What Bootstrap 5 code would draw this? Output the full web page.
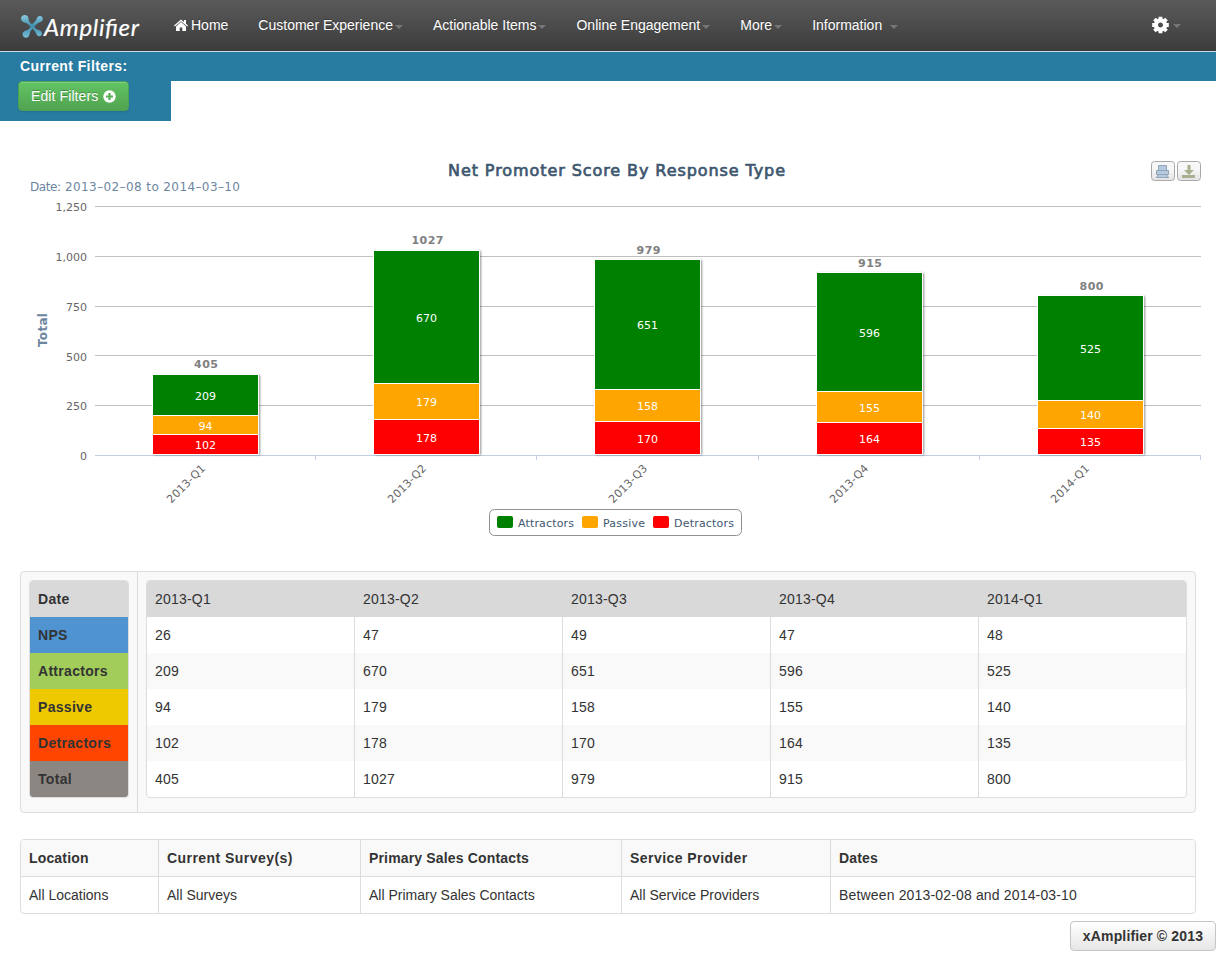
<!DOCTYPE html>
<html lang="en">
<head>
<meta charset="utf-8">
<title>xAmplifier</title>
<link href="https://cdn.jsdelivr.net/npm/bootstrap@5.3.0/dist/css/bootstrap.min.css" rel="stylesheet">
<style>
body{font:14px/20px "Liberation Sans",Arial,sans-serif;color:#333;background:#fff;overflow-x:hidden}
.topbar{height:52px;padding:0;background:linear-gradient(#5a5a5a,#3c3c3c);border-bottom:1px solid #cfdbe2}
.topbar .nav-link{padding:15px 15px 17px;color:#fff;line-height:20px;display:flex;align-items:center;text-shadow:0 -1px 0 rgba(0,0,0,.25)}
.logo{width:159px;flex:none}
.settings{margin-right:35px}
.home-icon{margin-right:3px}
.arrow{border:4px solid transparent;border-top-color:#777;border-bottom:0;margin:3px 0 0 2px}
.filterbar{height:29px;background:#287ba1;color:#fff;font-weight:700;padding:4px 20px;letter-spacing:.4px}
.filtertail{height:40px;width:171px;background:#287ba1;padding-left:18px}
.btn-edit{height:30px;width:111px;padding:4px 0 4px 12px;font-size:14px;line-height:20px;letter-spacing:.1px;color:#fff;background:linear-gradient(#62c462,#51a351);border:1px solid #4ba257;border-radius:4px;text-align:left;text-shadow:0 -1px 0 rgba(0,0,0,.25);box-shadow:inset 0 1px 0 rgba(255,255,255,.2),0 1px 2px rgba(0,0,0,.1);display:flex;align-items:center;gap:5px}
.chart{display:block}
.chart text{font-family:"DejaVu Sans",sans-serif;font-size:11px}
.chart .inbar{fill:#fff;text-anchor:middle}
.chart .sum{fill:#808080;font-weight:700;text-anchor:middle}
.chart .tick{fill:#666;text-anchor:end}
.chart .key{fill:#3e576f}
.chart .title{font-size:16px;fill:#3e576f;stroke:#3e576f;stroke-width:.7px}
.chart .sub{font-size:12px;fill:#6d869f}
.chart .axis{font-size:12px;font-weight:700;fill:#6d869f}
.panel{margin:0 20px;height:242px;border:1px solid #ddd;border-radius:4px;background:#f9f9f9;letter-spacing:.2px}
.panel .side{width:117px;border-right:1px solid #ddd;padding:8px}
.panel .main{padding:8px}
.tbl{margin:0;color:#333;border-collapse:separate;border-spacing:0;table-layout:fixed;border:1px solid #ddd;border-radius:4px;overflow:hidden;background:#fff;width:100%}
.tbl th,.tbl td{height:36px;padding:8px;line-height:20px;border:0;text-align:left}
.panel td+td{border-left:1px solid #ddd}
.panel .heads td{background:#d9d9d9;border-color:#d9d9d9}
.striped tr:nth-child(odd):not(.heads) td{background:#f9f9f9}
.side th{letter-spacing:.3px}
.info{margin:26px 20px 0}
.info .tbl th{background:#f9f9f9;letter-spacing:.16px}
.info .tbl th:nth-child(even){letter-spacing:.45px}
.info td{border-top:1px solid #ddd}
.info td:last-child{letter-spacing:.16px}
.info th+th,.info td+td{border-left:1px solid #ddd}
.info .tbl td{height:37px}
.btn-foot{width:146px;height:30px;margin-top:7px;padding:4px 0;font-size:14px;line-height:20px;font-weight:700;color:#333;border:1px solid #c5c5c5;border-radius:4px;background:linear-gradient(#fff,#e6e6e6);letter-spacing:.15px}
</style>
</head>
<body>
<nav class="topbar d-flex">
  <a class="logo" href="#" aria-label="Amplifier">
    <svg width="159" height="51" viewBox="0 0 159 51">
      <defs><linearGradient id="xg" x1="0" y1="0" x2="0" y2="1"><stop offset="0" stop-color="#8ccbe0"/><stop offset=".5" stop-color="#3f8fae"/><stop offset="1" stop-color="#79bfd8"/></linearGradient></defs>
      <path fill="url(#xg)" d="M21 18.500c0-2.500 2-3.700 4-3.500 2.500.2 3.500 2 3.500 4 .2 2.500 1.500 3.500 3.500 5.500 2.500-2.500 4-3.500 4.500-5.500.5-2 1.800-3 3.500-3s2.800 1.300 2.800 3c0 2-1.500 3-3.500 3.500-2.300.8-3.500 2.300-5 4.500 1.500 2 3 2.700 5 3.300 1.800.6 2.700 1.700 2.700 3.300 0 1.500-1.200 2.600-2.700 2.600-1.800 0-2.700-1.200-3.300-2.900-.6-1.800-1.800-3.200-3.500-4.600-1.700 1.500-2.500 3-2.800 5-.3 2.200-1.400 4-3.700 4-2 0-3.500-1.500-3.500-3.400 0-2.300 1.700-3.300 3.500-3.800 2-.6 3.300-1.700 4.500-3.500-1.500-2-3.200-3.800-5.500-4.300-2.500-.6-4-2-4-4.200z"/>
      <text x="44" y="36" textLength="95" fill="#fff" stroke="#fff" stroke-width=".2" font-family="Lato, sans-serif" font-size="24" font-style="italic">Amplifier</text>
    </svg>
  </a>
  <ul class="nav flex-nowrap">
    <li><a class="nav-link" href="#"><svg class="home-icon" width="14" height="12" viewBox="0 0 14 12" fill="#fff"><path d="M7 .5 0 6.600l.8.9L7 2.200l6.200 5.300.8-.9-2-1.800V1h-2v2zM7 3.100 2 7.400V12H5.700V8.500h2.600V12H12V7.400z"/></svg>Home</a></li>
    <li><a class="nav-link" href="#">Customer Experience<span class="arrow"></span></a></li>
    <li><a class="nav-link" href="#">Actionable Items<span class="arrow"></span></a></li>
    <li><a class="nav-link" href="#">Online Engagement<span class="arrow"></span></a></li>
    <li><a class="nav-link" href="#">More<span class="arrow"></span></a></li>
    <li><a class="nav-link" href="#">Information<span class="arrow ms-2"></span></a></li>
  </ul>
  <a class="nav-link settings ms-auto pe-0" href="#" aria-label="Settings"><svg width="17" height="18" viewBox="-8.500 -9 17 18"><circle r="4.600" fill="none" stroke="#fff" stroke-width="4.200"/><g stroke="#fff" stroke-width="3.800"><path d="M0-8.300V-5M0 8.300V5M-8.300 0H-5M8.300 0H5M-6-6l2.500 2.500M6 6 3.500 3.500M-6 6l2.500-2.500M6-6 3.500-3.500"/></g></svg><span class="arrow ms-1"></span></a>
</nav>
<div class="filterbar">Current Filters:</div>
<div class="filtertail"><button class="btn btn-edit" type="button">Edit Filters <svg width="13" height="13" viewBox="0 0 13 13"><circle cx="6.500" cy="6.500" r="6.200" fill="#fff"/><path d="M6.500 3v7M3 6.500h7" stroke="#55ad55" stroke-width="2.200"/></svg></button></div>

<svg class="chart" width="1216" height="450" viewBox="0 121 1216 450">
  <defs>
    <linearGradient id="bg" x1="0" y1="0" x2="0" y2="1"><stop offset=".4" stop-color="#f7f7f7"/><stop offset="1" stop-color="#e3e3e3"/></linearGradient>
    <filter id="sh" x="-10%" y="-10%" width="120%" height="120%"><feGaussianBlur stdDeviation=".8"/></filter>
  </defs>
  <text class="title" x="448" y="176" textLength="337">Net Promoter Score By Response Type</text>
  <text class="sub" x="30" y="191"><tspan textLength="31">Date:</tspan><tspan x="65" textLength="175">2013–02–08 to 2014–03–10</tspan></text>
  <text class="axis" transform="translate(47 347) rotate(-90)" textLength="34">Total</text>
  <!-- export buttons -->
  <g stroke="#aaa" fill="url(#bg)"><rect x="1151.500" y="161.500" width="23" height="19" rx="3"/><rect x="1177.500" y="161.500" width="23" height="19" rx="3"/></g>
  <g fill="#b5c9df" stroke="#91a4b8"><path d="M1158.500 165.500h8v5h-8z"/><path d="M1156.500 170.500h12v4h-12z"/><path d="M1158.500 174.500h8l2 3h-12z"/></g>
  <g fill="#a8af8e"><path d="M1187.500 165h3v5h3.500l-5 5-5-5h3.500z"/><path d="M1182 175h13v3h-13z"/></g>
  <g stroke="#c0c0c0" fill="none"><path d="M95 206.500H1201M95 256.500H1201M95 306.500H1201M95 355.500H1201M95 405.500H1201"/><path stroke="#c0d0e0" d="M95 455.500H1201M315.500 455v5M536.500 455v5M758.500 455v5M979.500 455v5M1200.500 455v5"/></g>
  <g>
    <text class="tick" x="87" y="211">1,250</text><text class="tick" x="87" y="261">1,000</text><text class="tick" x="87" y="311">750</text><text class="tick" x="87" y="361">500</text><text class="tick" x="87" y="410">250</text><text class="tick" x="87" y="460">0</text>
  </g>
  <g fill="#000" opacity=".42" filter="url(#sh)"><path d="M154 375h106v80H154zM375 251h106v204H375zM596 260h106v195H596zM818 273h106v182H818zM1039 296h106v159H1039z"/></g>
  <g fill="#fff"><path d="M152 374h107v81H152zM373 250h107v205H373zM594 259h107v196H594zM816 272h107v183H816zM1037 295h107v160H1037z"/></g>
  <path fill="green" d="M153 375h105v40H153zM374 251h105v132H374zM595 260h105v129H595zM817 273h105v118H817zM1038 296h105v104H1038z"/>
  <path fill="orange" d="M153 416h105v18H153zM374 384h105v35H374zM595 390h105v31H595zM817 392h105v30H817zM1038 401h105v27H1038z"/>
  <path fill="red" d="M153 435h105v19H153zM374 420h105v34H374zM595 422h105v32H595zM817 423h105v31H817zM1038 429h105v25H1038z"/>
  <g>
    <text class="inbar" x="205.500" y="400">209</text><text class="inbar" x="205.500" y="430">94</text><text class="inbar" x="205.500" y="449">102</text>
    <text class="inbar" x="426.500" y="322">670</text><text class="inbar" x="426.500" y="406">179</text><text class="inbar" x="426.500" y="442">178</text>
    <text class="inbar" x="647.500" y="329">651</text><text class="inbar" x="647.500" y="410">158</text><text class="inbar" x="647.500" y="443">170</text>
    <text class="inbar" x="869.500" y="337">596</text><text class="inbar" x="869.500" y="412">155</text><text class="inbar" x="869.500" y="443">164</text>
    <text class="inbar" x="1090.500" y="353">525</text><text class="inbar" x="1090.500" y="419">140</text><text class="inbar" x="1090.500" y="446">135</text>
  </g>
  <g>
    <text class="sum" x="206" y="368" textLength="24">405</text>
    <text class="sum" x="427.500" y="244" textLength="32">1027</text>
    <text class="sum" x="648.500" y="254" textLength="24">979</text>
    <text class="sum" x="870" y="267" textLength="24">915</text>
    <text class="sum" x="1091.500" y="290" textLength="24">800</text>
  </g>
  <g>
    <text class="tick" transform="translate(206 469) rotate(-45)" textLength="49">2013-Q1</text>
    <text class="tick" transform="translate(427 469) rotate(-45)" textLength="49">2013-Q2</text>
    <text class="tick" transform="translate(648 469) rotate(-45)" textLength="49">2013-Q3</text>
    <text class="tick" transform="translate(869 469) rotate(-45)" textLength="49">2013-Q4</text>
    <text class="tick" transform="translate(1090 469) rotate(-45)" textLength="49">2014-Q1</text>
  </g>
  <rect x="489.500" y="509.500" width="252" height="26" rx="5" fill="#fff" stroke="#909090"/>
  <rect x="497" y="516" width="16" height="12" rx="2" fill="green"/><rect x="582" y="516" width="16" height="12" rx="2" fill="orange"/><rect x="653" y="516" width="16" height="12" rx="2" fill="red"/>
  <text class="key" x="518" y="527" textLength="56">Attractors</text><text class="key" x="603" y="527" textLength="42">Passive</text><text class="key" x="674" y="527" textLength="60">Detractors</text>
</svg>

<section class="panel d-flex">
  <div class="side flex-shrink-0">
    <table class="tbl">
      <tr><th style="background:#d9d9d9">Date</th></tr>
      <tr><th style="background:#4f94d0">NPS</th></tr>
      <tr><th style="background:#a2cd5a">Attractors</th></tr>
      <tr><th style="background:#eec900">Passive</th></tr>
      <tr><th style="background:#ff4500">Detractors</th></tr>
      <tr><th style="background:#8b8682">Total</th></tr>
    </table>
  </div>
  <div class="main flex-grow-1">
    <table class="tbl striped">
      <colgroup><col style="width:207px"><col style="width:208px"><col style="width:208px"><col style="width:208px"><col></colgroup>
      <tr class="heads"><td>2013-Q1</td><td>2013-Q2</td><td>2013-Q3</td><td>2013-Q4</td><td>2014-Q1</td></tr>
      <tr><td>26</td><td>47</td><td>49</td><td>47</td><td>48</td></tr>
      <tr><td>209</td><td>670</td><td>651</td><td>596</td><td>525</td></tr>
      <tr><td>94</td><td>179</td><td>158</td><td>155</td><td>140</td></tr>
      <tr><td>102</td><td>178</td><td>170</td><td>164</td><td>135</td></tr>
      <tr><td>405</td><td>1027</td><td>979</td><td>915</td><td>800</td></tr>
    </table>
  </div>
</section>
<section class="info">
  <table class="tbl">
    <colgroup><col style="width:137px"><col style="width:202px"><col style="width:261px"><col style="width:209px"><col></colgroup>
    <tr><th>Location</th><th>Current Survey(s)</th><th>Primary Sales Contacts</th><th>Service Provider</th><th>Dates</th></tr>
    <tr><td>All Locations</td><td>All Surveys</td><td>All Primary Sales Contacts</td><td>All Service Providers</td><td>Between 2013-02-08 and 2014-03-10</td></tr>
  </table>
</section>
<footer class="d-flex justify-content-end"><button class="btn btn-foot" type="button">xAmplifier © 2013</button></footer>
<script src="https://cdn.jsdelivr.net/npm/bootstrap@5.3.0/dist/js/bootstrap.bundle.min.js"></script>
</body>
</html>
